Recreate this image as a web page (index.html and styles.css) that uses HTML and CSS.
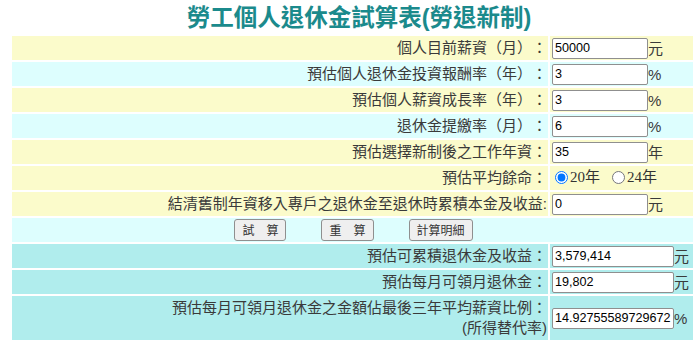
FILE: index.html
```html
<!DOCTYPE html>
<html lang="zh-Hant">
<head>
<meta charset="utf-8">
<title>勞工個人退休金試算表(勞退新制)</title>
<link rel="stylesheet" href="styles.css">
</head>
<body>
<h1 class="title">勞工個人退休金試算表(勞退新制)</h1>
<table class="calc">
  <tr class="row-y">
    <td class="label">個人目前薪資（月）：</td>
    <td class="field"><input class="inp" type="text" value="50000"><span class="unit">元</span></td>
  </tr>
  <tr class="row-c">
    <td class="label">預估個人退休金投資報酬率（年）：</td>
    <td class="field"><input class="inp" type="text" value="3"><span class="unit pct">%</span></td>
  </tr>
  <tr class="row-y">
    <td class="label">預估個人薪資成長率（年）：</td>
    <td class="field"><input class="inp" type="text" value="3"><span class="unit pct">%</span></td>
  </tr>
  <tr class="row-c">
    <td class="label">退休金提繳率（月）：</td>
    <td class="field"><input class="inp" type="text" value="6"><span class="unit pct">%</span></td>
  </tr>
  <tr class="row-y">
    <td class="label">預估選擇新制後之工作年資：</td>
    <td class="field"><input class="inp" type="text" value="35"><span class="unit">年</span></td>
  </tr>
  <tr class="row-y">
    <td class="label">預估平均餘命：</td>
    <td class="field radios"><label class="opt"><input type="radio" name="life" checked>20年</label><label class="opt"><input type="radio" name="life">24年</label></td>
  </tr>
  <tr class="row-y">
    <td class="label">結清舊制年資移入專戶之退休金至退休時累積本金及收益:</td>
    <td class="field"><input class="inp" type="text" value="0"><span class="unit">元</span></td>
  </tr>
  <tr class="row-c">
    <td class="buttons" colspan="2">
      <div class="btn-group">
        <button class="btn" type="button">試　算</button>
        <button class="btn" type="button">重　算</button>
        <button class="btn" type="button">計算明細</button>
      </div>
    </td>
  </tr>
  <tr class="row-r">
    <td class="label">預估可累積退休金及收益：</td>
    <td class="field"><input class="inp wide" type="text" value="3,579,414"><span class="unit">元</span></td>
  </tr>
  <tr class="row-r">
    <td class="label">預估每月可領月退休金：</td>
    <td class="field"><input class="inp wide" type="text" value="19,802"><span class="unit">元</span></td>
  </tr>
  <tr class="row-r tall">
    <td class="label two">預估每月可領月退休金之金額佔最後三年平均薪資比例：<br>(所得替代率)</td>
    <td class="field"><input class="inp wide" type="text" value="14.92755589729672"><span class="unit pct">%</span></td>
  </tr>
</table>
</body>
</html>
```
FILE: styles.css
```css
html, body {
  margin: 0;
  padding: 0;
  background: #ffffff;
}
body {
  font-family: "Liberation Sans", "Noto Sans CJK TC", sans-serif;
  color: #333333;
  text-spacing-trim: space-all;
}
.title {
  margin: 0;
  height: 34px;
  padding-left: 18px;
  line-height: 36px;
  font-size: 23.5px;
  font-weight: bold;
  color: #1b8a8c;
  text-align: center;
}
.calc {
  margin-left: 10px;
  width: 685px;
  border-collapse: separate;
  border-spacing: 2px;
  table-layout: fixed;
}
.calc td {
  padding: 0;
  height: 24px;
  font-size: 15px;
  line-height: 18px;
  vertical-align: middle;
}
.calc td.label {
  width: 535px;
  text-align: right;
  padding-right: 1px;
  color: #3a3a3a;
}
.row-y td { background: #fbfbcb; }
.row-c td { background: #ddfefe; }
.row-r td { background: #b0eded; }
.row-r.tall td { height: 44px; }
.label.two { line-height: 20px; }
.field {
  white-space: nowrap;
  padding-left: 2px !important;
}
.inp {
  box-sizing: border-box;
  width: 96px;
  height: 21px;
  margin: 0;
  padding: 1px 2px;
  border: 1px solid #8f8f8f;
  border-radius: 2px;
  font-family: "Liberation Sans", sans-serif;
  font-size: 12.6px;
  color: #000;
  background: #fff;
  vertical-align: middle;
}
.inp.wide { width: 122px; }
.unit {
  font-size: 15px;
  vertical-align: middle;
  color: #3a3a3a;
}
.unit.pct { font-family: "Liberation Sans", sans-serif; }
.radios {
  font-family: "Liberation Serif", "Noto Sans CJK TC", serif;
  font-size: 16px;
}
.opt {
  display: inline-flex;
  align-items: center;
  margin-right: 9px;
  color: #333;
}
.opt input {
  margin: 0 2px 0 3px;
  width: 13px;
  height: 13px;
}
.buttons {
  text-align: center;
}
.btn-group {
  display: flex;
  justify-content: center;
  gap: 35px;
  padding-left: 2px;
}
.btn {
  height: 22px;
  padding: 0 7px;
  font-family: "Noto Sans CJK TC", sans-serif;
  font-size: 12px;
  line-height: 20px;
  color: #333;
  background: #efefef;
  border: 1px solid #8f8f8f;
  border-radius: 3px;
}
```
